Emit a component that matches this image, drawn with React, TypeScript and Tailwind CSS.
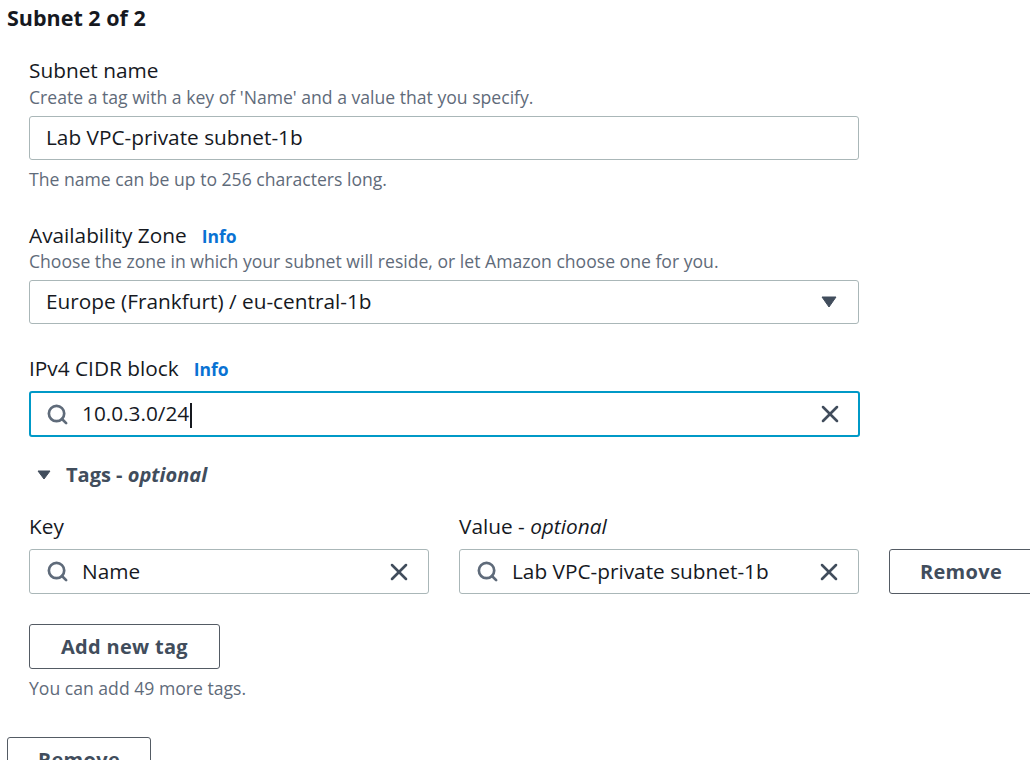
import { Search, X } from 'lucide-react';

function Info() {
  return <span className="ml-[15px] text-[17.5px] leading-[24px] font-bold text-[#0972d3]">Info</span>;
}

function Label({ children }: { children: React.ReactNode }) {
  return <div className="text-[20.8px] leading-[24px] text-[#16191f]">{children}</div>;
}

function Hint({ children }: { children: React.ReactNode }) {
  return <div className="text-[17.6px] leading-[20px] text-[#5f6b7a]">{children}</div>;
}

function SearchInput({ value, width, focused }: { value: string; width: string; focused?: boolean }) {
  return (
    <div
      className={`${width} flex items-center rounded-[3px] bg-white ${
        focused ? 'h-[46px] border-2 border-[#0099c7] pl-[15px] pr-[14px]' : 'h-[45px] border border-[#aab7b8] pl-[16px] pr-[15px]'
      }`}
    >
      <Search size={23} strokeWidth={2.8} className="text-[#5f6b7a]" />
      <span className="ml-[13px] flex-1 text-[20.8px] text-[#16191f] whitespace-nowrap">
        {value}
        {focused && <span className="inline-block w-[1.5px] h-[25px] bg-[#16191f] align-middle ml-[1px]" />}
      </span>
      <X size={28} strokeWidth={2.2} className="text-[#414d5c]" />
    </div>
  );
}

function Button({ children, className }: { children: React.ReactNode; className: string }) {
  return (
    <div
      className={`h-[45px] flex items-center justify-center rounded-[3px] border border-[#545b64] bg-white text-[20px] font-bold text-[#414d5c] tracking-[0.3px] ${className}`}
    >
      {children}
    </div>
  );
}

export default function App() {
  return (
    <div
      className="w-[1030px] h-[760px] overflow-hidden bg-white"
      style={{ fontFamily: '"Open Sans", "Noto Sans", sans-serif' }}
    >
      <div className="pl-[7px] pt-[4px] text-[21.5px] leading-[28px] font-bold text-[#16191f]">Subnet 2 of 2</div>

      <div className="pl-[29px] pt-[26px]">
        <Label>Subnet name</Label>
        <div className="mt-[5px]">
          <Hint>Create a tag with a key of 'Name' and a value that you specify.</Hint>
        </div>
        <div className="mt-[9px] w-[830px] h-[44px] flex items-center pl-[16px] border border-[#aab7b8] rounded-[3px] text-[20.8px] text-[#16191f]">
          Lab VPC-private subnet-1b
        </div>
        <div className="mt-[9px]">
          <Hint>The name can be up to 256 characters long.</Hint>
        </div>

        <div className="mt-[34px] flex items-baseline">
          <Label>Availability Zone</Label>
          <Info />
        </div>
        <div className="mt-[3px]">
          <Hint>Choose the zone in which your subnet will reside, or let Amazon choose one for you.</Hint>
        </div>
        <div className="mt-[9px] w-[830px] h-[44px] flex items-center justify-between pl-[16px] pr-[21px] border border-[#aab7b8] rounded-[3px] text-[20.8px] text-[#16191f]">
          <span>Europe (Frankfurt) / eu-central-1b</span>
          <svg width="16" height="12" viewBox="0 0 16 12">
            <path d="M1 1 L15 1 L8 11 Z" fill="#414d5c" stroke="#414d5c" strokeLinejoin="round" />
          </svg>
        </div>

        <div className="mt-[32px] flex items-baseline">
          <Label>IPv4 CIDR block</Label>
          <Info />
        </div>
        <div className="mt-[10px]">
          <SearchInput value="10.0.3.0/24" width="w-[831px]" focused />
        </div>

        <div className="mt-[24px] h-[28px] flex items-center pl-[8px]">
          <svg width="14" height="10" viewBox="0 0 14 10">
            <path d="M1 1 L13 1 L7 9 Z" fill="#414d5c" stroke="#414d5c" strokeLinejoin="round" />
          </svg>
          <span className="ml-[15px] text-[20px] font-bold text-[#414d5c]">
            Tags - <i>optional</i>
          </span>
        </div>

        <div className="mt-[25px] flex gap-[30px] items-end">
          <div>
            <Label>Key</Label>
            <div className="mt-[11px]">
              <SearchInput value="Name" width="w-[400px]" />
            </div>
          </div>
          <div>
            <Label>
              Value - <i>optional</i>
            </Label>
            <div className="mt-[11px]">
              <SearchInput value="Lab VPC-private subnet-1b" width="w-[400px]" />
            </div>
          </div>
          <Button className="w-[144px] shrink-0">Remove</Button>
        </div>

        <Button className="mt-[30px] w-[191px]">Add new tag</Button>
        <div className="mt-[9px]">
          <Hint>You can add 49 more tags.</Hint>
        </div>
      </div>

      <div className="pl-[7px] mt-[39px]">
        <Button className="w-[144px]">Remove</Button>
      </div>
    </div>
  );
}
